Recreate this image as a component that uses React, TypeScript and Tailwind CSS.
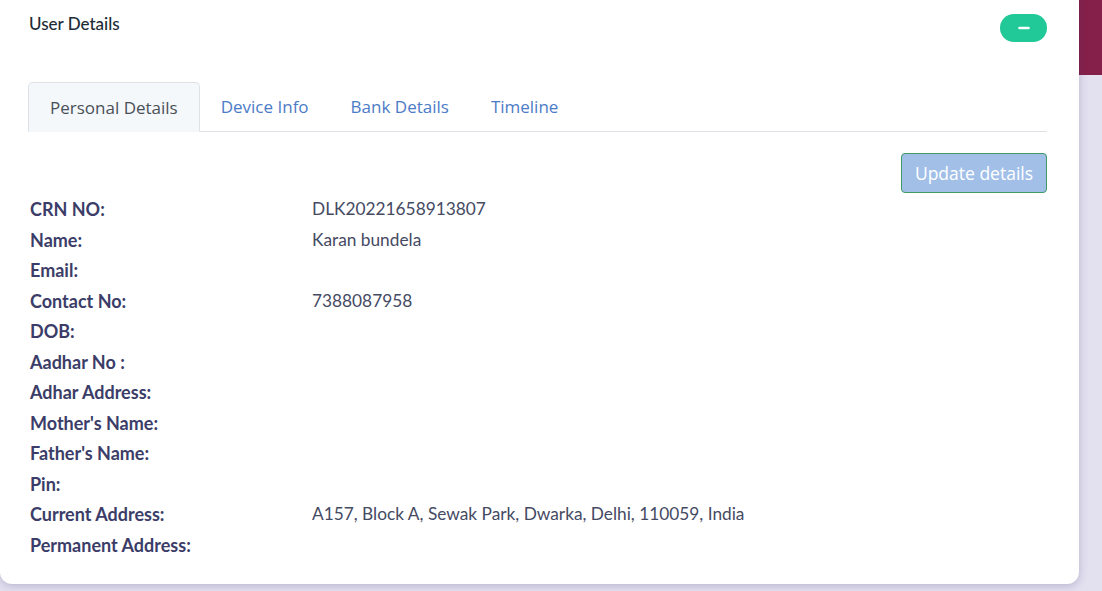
import { Minus } from "lucide-react";

const tabs = ["Personal Details", "Device Info", "Bank Details", "Timeline"];

const rows: [string, string][] = [
  ["CRN NO:", "DLK20221658913807"],
  ["Name:", "Karan bundela"],
  ["Email:", ""],
  ["Contact No:", "7388087958"],
  ["DOB:", ""],
  ["Aadhar No :", ""],
  ["Adhar Address:", ""],
  ["Mother's Name:", ""],
  ["Father's Name:", ""],
  ["Pin:", ""],
  ["Current Address:", "A157, Block A, Sewak Park, Dwarka, Delhi, 110059, India"],
  ["Permanent Address:", ""],
];

export default function App() {
  return (
    <div className="w-[1102px] h-[591px] overflow-hidden bg-[linear-gradient(to_bottom,#85204a_0,#85204a_75px,#e3e1f0_75px)]">
      <div className="w-[1079px] -mt-[12px] bg-white rounded-[12px] shadow-[0_2px_8px_rgba(60,50,110,0.25)] pl-[28px] pr-[32px] pt-[26px] pb-[23px]">
        {/* header */}
        <div className="flex items-start justify-between">
          <h3 className="pl-[1px] text-[17px] leading-[20px] font-medium text-[#1d2b36] font-['Lato',sans-serif]">
            User Details
          </h3>
          <button className="w-[47px] h-[28px] rounded-full bg-[#20c997] flex items-center justify-center text-white">
            <Minus size={16} strokeWidth={3.5} />
          </button>
        </div>

        {/* tabs */}
        <div className="mt-[40px] flex border-b border-[#dee2e6] font-['Open_Sans',sans-serif] text-[17px]">
          {tabs.map((t, i) =>
            i === 0 ? (
              <div
                key={t}
                className="-mb-px h-[50px] px-[21px] pt-[1px] flex items-center bg-[#f5f8fb] border border-[#dee2e6] border-b-[#f5f8fb] rounded-t-[5px] text-[#495057]"
              >
                {t}
              </div>
            ) : (
              <div key={t} className="h-[49px] px-[21px] pt-[1px] flex items-center text-[#4c7bc7]">
                {t}
              </div>
            )
          )}
        </div>

        {/* button */}
        <div className="mt-[21px] flex justify-end">
          <button className="w-[146px] h-[40px] rounded-[4px] bg-[#a2bfe8] border border-[#3f9a63] text-white text-[17.5px] font-['Open_Sans',sans-serif]">
            Update details
          </button>
        </div>

        {/* rows */}
        <div className="mt-[1px] pl-[2px] leading-[30.55px] font-['Lato',sans-serif]">
          {rows.map(([label, value]) => (
            <div key={label} className="flex">
              <div className="w-[282px] text-[18px] font-bold text-[#3b3d68]">{label}</div>
              <div className="text-[17.3px] text-[#454a63]">{value}</div>
            </div>
          ))}
        </div>
      </div>
    </div>
  );
}
